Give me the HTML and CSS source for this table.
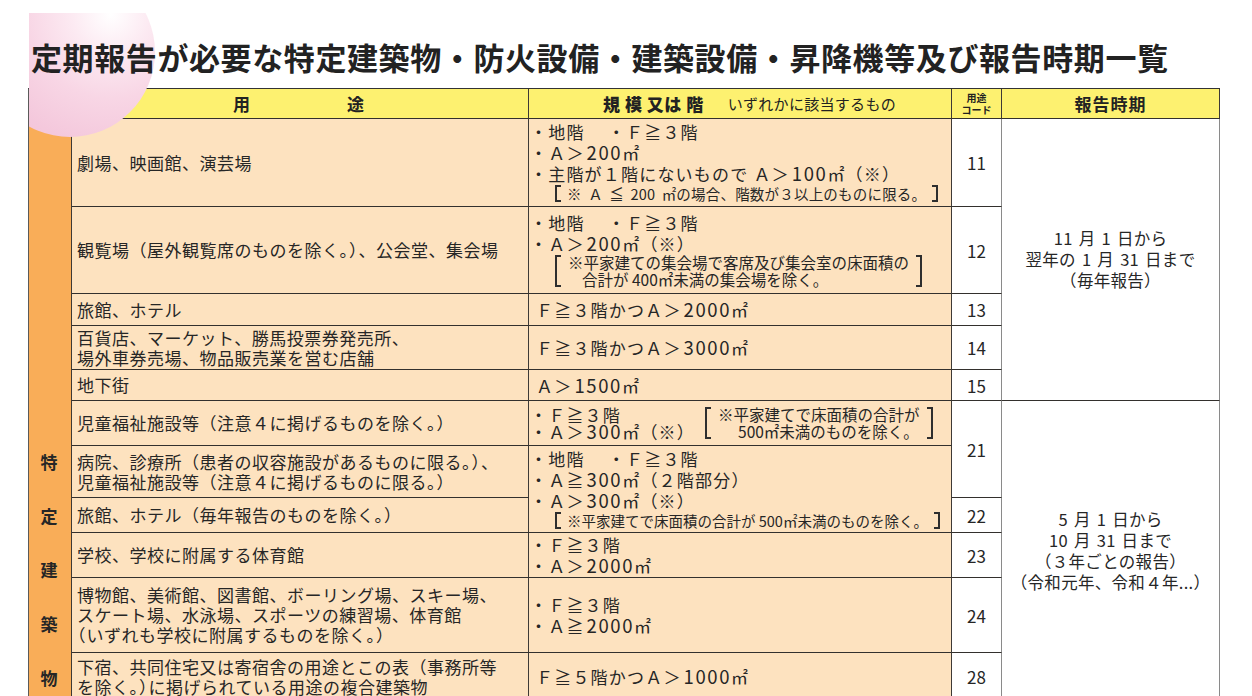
FILE: index.html
```html
<!DOCTYPE html>
<html lang="ja">
<head>
<meta charset="utf-8">
<title>定期報告が必要な特定建築物・防火設備・建築設備・昇降機等及び報告時期一覧</title>
<link rel="stylesheet" href="styles.css">
</head>
<body>
<div class="page">
  <div class="blob"><div class="blob-circle"></div></div>
  <h1 class="title">定期報告が必要な特定建築物・防火設備・建築設備・昇降機等及び報告時期一覧</h1>

  <div class="table">
    <div class="hd hd-use"><span>用</span><span>途</span></div>
    <div class="hd hd-scale"><b>規 模 又は 階</b><span class="hd-note">いずれかに該当するもの</span></div>
    <div class="hd hd-code"><span>用途</span><span>コード</span></div>
    <div class="hd hd-period">報告時期</div>

    <div class="cat"><span>特</span><span>定</span><span>建</span><span>築</span><span>物</span></div>

    <div class="use"><div>劇場、映画館、演芸場</div></div>
    <div class="scale">
      <div>・地階　 ・Ｆ≧３階</div>
      <div>・Ａ＞<span class="n">200</span>㎡</div>
      <div>・主階が１階にないもので Ａ＞<span class="n">100</span>㎡（※）</div>
      <div class="note note-sm note-wide">※ Ａ ≦ 200 ㎡の場合、階数が３以上のものに限る。</div>
    </div>
    <div class="code">11</div>
    <div class="period p1">
      <div>11 月 1 日から</div>
      <div>翌年の 1 月 31 日まで</div>
      <div>（毎年報告）</div>
    </div>

    <div class="use"><div>観覧場（屋外観覧席のものを除く<span class="hw">。）</span>、公会堂、集会場</div></div>
    <div class="scale">
      <div>・地階　 ・Ｆ≧３階</div>
      <div>・Ａ＞<span class="n">200</span>㎡（※）</div>
      <div class="note">
        <div>※平家建ての集会場で客席及び集会室の床面積の</div>
        <div class="ind">合計が 400㎡未満の集会場を除く。</div>
      </div>
    </div>
    <div class="code">12</div>

    <div class="use"><div>旅館、ホテル</div></div>
    <div class="scale pad"><div>Ｆ≧３階かつＡ＞<span class="n">2000</span>㎡</div></div>
    <div class="code">13</div>

    <div class="use"><div>百貨店、マーケット、勝馬投票券発売所、<br>場外車券売場、物品販売業を営む店舗</div></div>
    <div class="scale pad"><div>Ｆ≧３階かつＡ＞<span class="n">3000</span>㎡</div></div>
    <div class="code">14</div>

    <div class="use"><div>地下街</div></div>
    <div class="scale pad"><div>Ａ＞<span class="n">1500</span>㎡</div></div>
    <div class="code">15</div>

    <div class="use"><div>児童福祉施設等（注意４に掲げるものを除く<span class="hw">。）</span></div></div>
    <div class="scale s21">
      <div class="list">
        <div>・Ｆ≧３階</div>
        <div>・Ａ＞<span class="n">300</span>㎡（※）</div>
      </div>
      <div class="note">
        <div>※平家建てで床面積の合計が</div>
        <div class="ind2">500㎡未満のものを除く。</div>
      </div>
    </div>
    <div class="code c21">21</div>
    <div class="period p2">
      <div>5 月 1 日から</div>
      <div>10 月 31 日まで</div>
      <div>（３年ごとの報告）</div>
      <div>（令和元年、令和４年...）</div>
    </div>

    <div class="use"><div>病院、診療所（患者の収容施設があるものに限る<span class="hw">。）</span>、<br>児童福祉施設等（注意４に掲げるものに限る<span class="hw">。）</span></div></div>
    <div class="scale s22">
      <div>・地階　 ・Ｆ≧３階</div>
      <div>・Ａ≧<span class="n">300</span>㎡（２階部分）</div>
      <div>・Ａ＞<span class="n">300</span>㎡（※）</div>
      <div class="note note-sm">※平家建てで床面積の合計が 500㎡未満のものを除く。</div>
    </div>

    <div class="use"><div>旅館、ホテル（毎年報告のものを除く<span class="hw">。）</span></div></div>
    <div class="code">22</div>

    <div class="use"><div>学校、学校に附属する体育館</div></div>
    <div class="scale">
      <div>・Ｆ≧３階</div>
      <div>・Ａ＞<span class="n">2000</span>㎡</div>
    </div>
    <div class="code">23</div>

    <div class="use"><div>博物館、美術館、図書館、ボーリング場、スキー場、<br>スケート場、水泳場、スポーツの練習場、体育館<br><span class="hw">（</span>いずれも学校に附属するものを除く<span class="hw">。）</span></div></div>
    <div class="scale">
      <div>・Ｆ≧３階</div>
      <div>・Ａ≧<span class="n">2000</span>㎡</div>
    </div>
    <div class="code">24</div>

    <div class="use"><div>下宿、共同住宅又は寄宿舎の用途とこの表（事務所等<br>を除く<span class="hw">。）</span>に掲げられている用途の複合建築物</div></div>
    <div class="scale pad"><div>Ｆ≧５階かつＡ＞<span class="n">1000</span>㎡</div></div>
    <div class="code">28</div>
  </div>
</div>
</body>
</html>
```

FILE: styles.css
```css
* {
  box-sizing: border-box;
}

html, body {
  margin: 0;
  padding: 0;
  background: #ffffff;
}

body {
  font-family: "Noto Sans CJK JP", "Noto Sans", "Liberation Sans", sans-serif;
  color: #262626;
}

.page {
  position: relative;
  width: 1252px;
  height: 696px;
  overflow: hidden;
  padding: 37px 0 0 28px;
}

/* decorative pink disc in the top-left corner */
.blob {
  position: absolute;
  left: 29px;
  top: 13px;
  width: 130px;
  height: 130px;
  overflow: hidden;
  z-index: 1;
}

.blob-circle {
  width: 170px;
  height: 170px;
  margin-left: -44px;
  margin-top: -46px;
  border-radius: 50%;
  background: radial-gradient(circle at 74% 28%, #ffffff 0%, #fceaf2 22%, #f8d6e5 48%, #f4c8dc 75%, #f2c2d8 100%);
}

.title {
  position: relative;
  z-index: 2;
  margin: 0 0 11px 3px;
  font-size: 31px;
  line-height: 40px;
  font-weight: 700;
  letter-spacing: 0.6px;
  white-space: nowrap;
  color: #222222;
}

/* table grid */
.table {
  display: grid;
  grid-template-columns: 43px 457px 423px 50px 218px;
  grid-template-rows: 30px 88px 87px 32px 44px 31px 45px 52px 35px 45px 75px 48px;
  width: max-content;
  border-top: 1px solid #333333;
  border-left: 1px solid #5a5a5a;
}

.table > div {
  border-right: 1px solid #3e3a36;
  border-bottom: 1px solid #33302d;
}

.hd {
  background: #fdf170;
  display: flex;
  align-items: center;
  font-weight: 700;
  font-size: 17px;
  color: #222222;
}

.hd-use {
  grid-column: span 2;
  justify-content: center;
  gap: 97px;
  padding-left: 40px;
}

.hd-scale {
  padding-left: 74px;
}

.hd-scale b {
  letter-spacing: 0.5px;
}

.hd-note {
  font-weight: 400;
  font-size: 15px;
  margin-left: 24px;
  letter-spacing: 0.3px;
}

.hd-code {
  flex-direction: column;
  justify-content: center;
  font-size: 10px;
  line-height: 12px;
  font-weight: 700;
  padding-top: 1px;
}

.hd-period {
  justify-content: center;
  letter-spacing: 1px;
}

.cat {
  grid-row: span 11;
  background: #f9ad58;
  display: flex;
  flex-direction: column;
  align-items: center;
  padding-top: 316px;
  font-weight: 700;
  font-size: 17px;
  line-height: 54px;
  padding-right: 2px;
}

.use {
  background: #fde2bf;
  display: flex;
  align-items: center;
  padding-left: 5px;
  font-size: 17px;
  line-height: 20px;
  letter-spacing: 0.5px;
  white-space: nowrap;
}

.hw {
  font-feature-settings: "halt" 1;
  letter-spacing: 1px;
}

.scale {
  background: #fde2bf;
  display: flex;
  flex-direction: column;
  justify-content: center;
  padding-left: 1px;
  font-size: 17px;
  line-height: 20px;
  letter-spacing: 1.2px;
  white-space: nowrap;
}

.n {
  font-size: 18.5px;
  line-height: 20px;
  letter-spacing: 1.6px;
  margin-left: 2px;
}

.scale.pad {
  padding-left: 7px;
}

.s21 {
  flex-direction: row;
  align-items: center;
  justify-content: flex-start;
  line-height: 17px;
}

.s21 .n {
  line-height: 17px;
}

.s21 .note {
  margin-left: 10px;
}

.s22 {
  grid-row: span 2;
}

.note {
  position: relative;
  align-self: flex-start;
  margin-left: 25px;
  padding: 0 13px 0 13px;
  font-size: 15.5px;
  line-height: 17px;
  letter-spacing: 0;
}

.s21 .note {
  align-self: center;
}

.note::before,
.note::after {
  content: "";
  position: absolute;
  top: 1px;
  bottom: 1px;
  width: 4px;
  border: 2px solid #2e2e2e;
}

.note::before {
  left: 0;
  border-right: none;
}

.note::after {
  right: 0;
  border-left: none;
}

.note-sm {
  font-size: 14.5px;
  padding: 0 12px;
  line-height: 19px;
}

.note-wide {
  word-spacing: 3px;
  letter-spacing: 0.2px;
}

.ind {
  padding-left: 14px;
}

.ind2 {
  padding-left: 20px;
}

.table > .code {
  background: #ffffff;
  display: flex;
  align-items: center;
  justify-content: center;
  font-size: 17px;
  border-right-color: #8a8a8a;
}

.c21 {
  grid-row: span 2;
}

.table > .period {
  background: #ffffff;
  display: flex;
  flex-direction: column;
  align-items: center;
  justify-content: center;
  font-size: 16.5px;
  line-height: 21px;
  letter-spacing: 0.3px;
  word-spacing: 2px;
  white-space: nowrap;
  border-right-color: #8a8a8a;
}

.p1 {
  grid-row: span 5;
}

.p2 {
  grid-row: span 6;
  line-height: 20px;
}
```
